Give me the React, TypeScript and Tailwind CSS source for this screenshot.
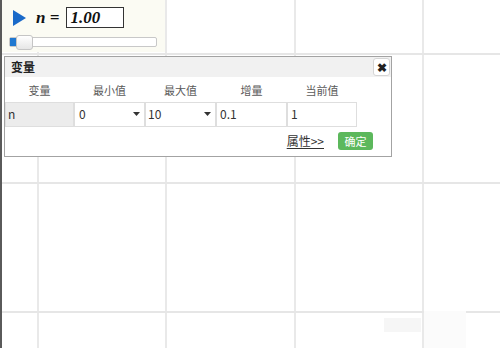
import React from 'react';

const cjk = { fontFamily: '"Noto Sans CJK SC", "Noto Sans", sans-serif' };

const Caret = () => (
  <svg width="7" height="4" viewBox="0 0 7 4">
    <polygon points="0,0 7,0 3.5,4" fill="#333" />
  </svg>
);

export default function App() {
  const vLines = [37, 165, 294, 422];
  const hLines = [53, 182, 311];

  return (
    <div className="relative h-[348px] w-[500px] overflow-hidden bg-white border-l-2 border-[#5a5a5a]" style={cjk}>
      {/* canvas grid */}
      {vLines.map((x) => (
        <div key={'v' + x} className="absolute top-0 bottom-0 w-[2px] bg-[#e9e9e9]" style={{ left: x - 2 }} />
      ))}
      {hLines.map((y) => (
        <div key={'h' + y} className="absolute left-0 right-0 h-[2px] bg-[#e6e6e6]" style={{ top: y }} />
      ))}

      {/* watermark */}
      <div className="absolute left-[382px] top-[318px] h-[14px] w-[37px] bg-[#f6f6f6]" />
      <div className="absolute left-[422px] top-[311px] h-[37px] w-[42px] bg-[#fbfbfb]" />

      {/* slider panel */}
      <div className="absolute left-0 top-0 h-[52px] w-[163px] bg-[#fbfbf3]">
        <div className="flex items-center gap-[10px] pl-[10px] pt-[5px]">
          <svg width="14" height="16" viewBox="0 0 14 16">
            <polygon points="1,0 14,8 1,16" fill="#1a6ac9" />
          </svg>
          <span className="text-[17px] font-bold italic text-[#111]" style={{ fontFamily: '"Liberation Serif", serif' }}>
            n =
          </span>
          <div
            className="-ml-[3px] h-[21px] w-[58px] border border-[#333] bg-white pl-[3px] text-[17px] font-bold italic leading-[19px] text-[#111]"
            style={{ fontFamily: '"Liberation Serif", serif' }}
          >
            1.00
          </div>
        </div>
        <div className="relative ml-[7px] mt-[6px] h-[10px] w-[148px] rounded-[2px] border border-[#c8c8c8] bg-white">
          <div className="absolute left-0 top-0 h-full w-[7px] bg-[#1f78d1]" />
          <div className="absolute left-[6px] top-[-3px] h-[15px] w-[17px] rounded-[3px] border border-[#c5c5c5] bg-gradient-to-b from-white to-[#e6e6e6]" />
        </div>
      </div>

      {/* dialog */}
      <div className="absolute left-[2px] top-[56px] w-[388px] border border-[#a3a3a3] bg-white">
        <div className="flex h-[20px] items-center justify-between bg-[#f1f1f1] pl-[6px] pr-[1px]">
          <span className="text-[12px] font-bold text-[#222]">变量</span>
          <div className="flex h-[18px] w-[17px] items-center justify-center rounded-[3px] border border-[#d5d5d5] bg-white text-[12px] font-bold leading-none text-[#222]">
            ✖
          </div>
        </div>
        <div className="grid grid-cols-[69px_71px_71px_71px_70px] pt-[5px] text-[11px] text-[#5a5a5a]">
          <div className="text-center">变量</div>
          <div className="text-center">最小值</div>
          <div className="text-center">最大值</div>
          <div className="text-center">增量</div>
          <div className="text-center">当前值</div>
        </div>
        <div className="mt-[3px] grid grid-cols-[69px_71px_71px_71px_70px] text-[12px] text-[#333]">
          <div className="flex h-[25px] items-center border border-[#dedede] bg-[#ececec] pl-[2px]">n</div>
          <div className="flex h-[25px] items-center justify-between border border-[#dedede] pl-[4px] pr-[4px]">
            <span>0</span>
            <Caret />
          </div>
          <div className="flex h-[25px] items-center justify-between border border-[#dedede] pl-[2px] pr-[4px]">
            <span>10</span>
            <Caret />
          </div>
          <div className="flex h-[25px] items-center border border-[#dedede] pl-[3px]">0.1</div>
          <div className="flex h-[25px] items-center border border-[#dedede] pl-[3px]">1</div>
        </div>
        <div className="flex h-[29px] items-center justify-end gap-[14px] pr-[18px]">
          <span className="text-[12px] text-[#333] underline underline-offset-2">属性&gt;&gt;</span>
          <div className="flex h-[18px] w-[35px] items-center justify-center rounded-[3px] bg-[#5cb85c] text-[11px] text-white">
            确定
          </div>
        </div>
      </div>
    </div>
  );
}
